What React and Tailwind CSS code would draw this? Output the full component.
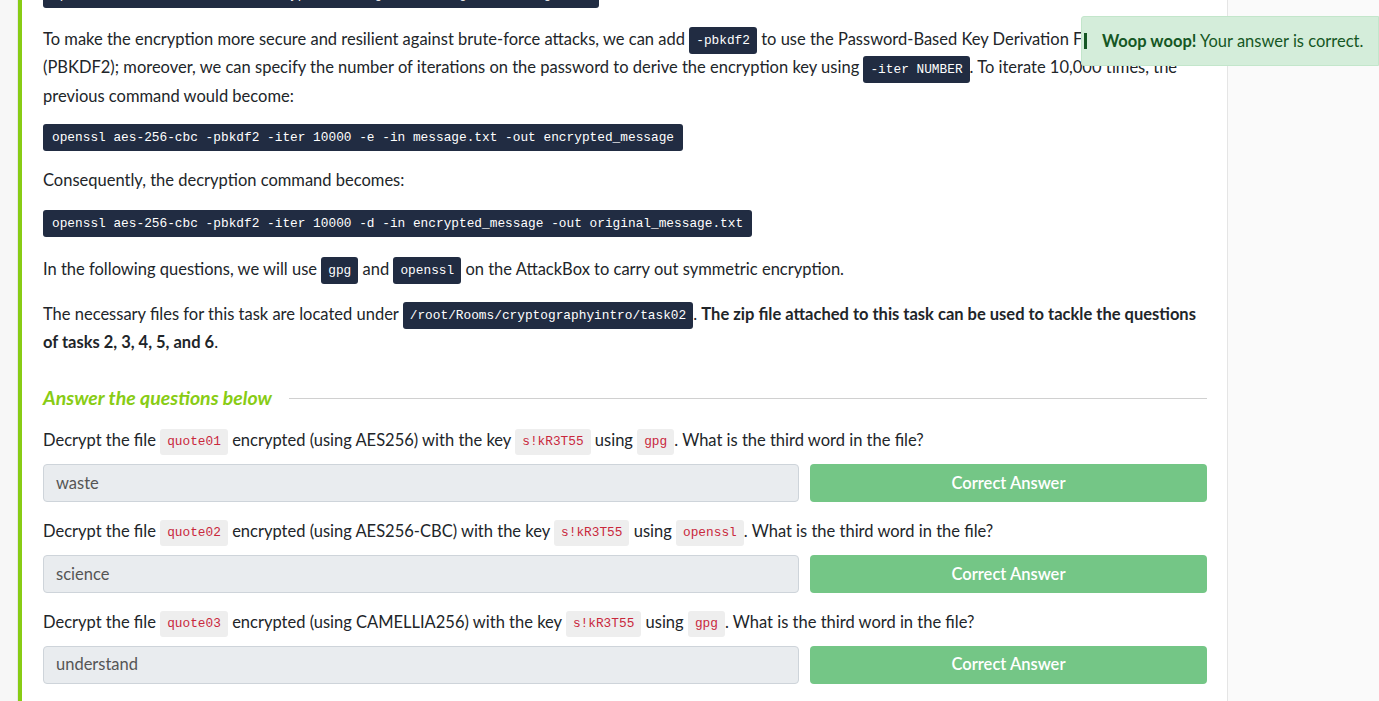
import React from "react";

const font = { fontFamily: "Lato, 'Liberation Sans', sans-serif" };

function Dark({ children }) {
  return (
    <code className="inline-block rounded-[3px] bg-[#212c42] px-[7px] py-[4px] align-middle font-['Liberation_Mono',monospace] text-[12.8px] leading-[19px] text-white">
      {children}
    </code>
  );
}

function Light({ children }) {
  return (
    <code className="inline-block rounded-[3px] bg-[#eeeeee] px-[7px] py-[4px] align-middle font-['Liberation_Mono',monospace] text-[12.8px] leading-[18px] text-[#c9283c]">
      {children}
    </code>
  );
}

function Block({ children, className = "" }) {
  return (
    <pre
      className={
        "w-fit rounded-[3px] bg-[#212c42] px-[9px] py-[5px] font-['Liberation_Mono',monospace] text-[12.8px] leading-[17px] text-white " +
        className
      }
    >
      {children}
    </pre>
  );
}

function Question({ file, algo, tool, answer }) {
  return (
    <div className="mb-[16px]">
      <p className="mb-[9px] leading-[26px]">
        Decrypt the file <Light>{file}</Light> encrypted (using {algo}) with the key{" "}
        <Light>s!kR3T55</Light> using <Light>{tool}</Light>. What is the third word in the file?
      </p>
      <div className="flex gap-[11px]">
        <div className="flex h-[38px] w-[756px] items-center rounded-[4px] border border-[#ced4da] bg-[#e9ecef] px-[12px] text-[#555]">
          {answer}
        </div>
        <button className="h-[38px] flex-1 rounded-[4px] bg-[#74c686] font-semibold text-white">
          Correct Answer
        </button>
      </div>
    </div>
  );
}

export default function App() {
  return (
    <div className="relative flex h-[701px] overflow-hidden bg-white text-[16.5px] text-[#212529]" style={font}>
      {/* left gutter */}
      <div className="w-[18px] shrink-0 border-r border-[#e8e8e8] bg-[#f7f7f7]" />

      {/* task body */}
      <div className="w-[1209px] shrink-0 border-l-[4px] border-[#88cc14] pl-[21px] pr-[20px]">
        <Block className="mt-[-19px] mb-[18px]">
          openssl aes-256-cbc -d -in encrypted_message -out original_message.txt
        </Block>

        <p className="mb-[15px] leading-[26px]">
          To make the encryption more secure and resilient against brute-force attacks, we can add{" "}
          <Dark>-pbkdf2</Dark> to use the Password-Based Key Derivation Function 2<br />
          (PBKDF2); moreover, we can specify the number of iterations on the password to derive the
          encryption key using <Dark>-iter NUMBER</Dark>. To iterate 10,000 times, the
          <br />
          previous command would become:
        </p>

        <Block className="mb-[16px]">
          openssl aes-256-cbc -pbkdf2 -iter 10000 -e -in message.txt -out encrypted_message
        </Block>

        <p className="mb-[16px] leading-[27px]">Consequently, the decryption command becomes:</p>

        <Block className="mb-[16px]">
          openssl aes-256-cbc -pbkdf2 -iter 10000 -d -in encrypted_message -out original_message.txt
        </Block>

        <p className="mb-[16px] pt-[3px] leading-[26px]">
          In the following questions, we will use <Dark>gpg</Dark> and <Dark>openssl</Dark> on the
          AttackBox to carry out symmetric encryption.
        </p>

        <p className="mb-[16px] pt-[1px] leading-[26px]">
          The necessary files for this task are located under{" "}
          <Dark>/root/Rooms/cryptographyintro/task02</Dark>.{" "}
          <b>
            The zip file attached to this task can be used to tackle the questions
            <br />
            of tasks 2, 3, 4, 5, and 6
          </b>
          .
        </p>

        <div className="mt-[30px] mb-[16px] flex items-center gap-[17px]">
          <h4 className="text-[19.5px] font-bold italic leading-[26px] text-[#88cc14]">
            Answer the questions below
          </h4>
          <div className="h-px flex-1 bg-[#d0d0d0]" />
        </div>

        <Question file="quote01" algo="AES256" tool="gpg" answer="waste" />
        <Question file="quote02" algo="AES256-CBC" tool="openssl" answer="science" />
        <Question file="quote03" algo="CAMELLIA256" tool="gpg" answer="understand" />
      </div>

      {/* right sidebar */}
      <div className="flex-1 border-l border-[#e5e5e5] bg-[#fafafa]" />

      {/* toast */}
      <div className="absolute right-0 top-[16px] flex h-[50px] w-[298px] items-center rounded-l-[3px] border border-[#c3e6cb] bg-[#d4edda] pl-[20px] text-[#155724]">
        <span className="absolute left-[2px] top-[16px] h-[16px] w-[3px] bg-[#155724]" />
        <span>
          <b>Woop woop!</b> Your answer is correct.
        </span>
      </div>
    </div>
  );
}
